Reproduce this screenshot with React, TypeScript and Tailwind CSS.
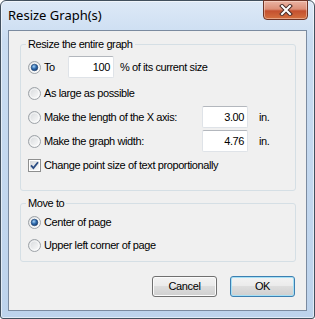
import React from 'react';

const body = "font-['Liberation_Sans',Arial,sans-serif] text-[11px] tracking-[-0.4px] text-black";

function Radio({ checked }: { checked?: boolean }) {
  return (
    <svg width="13" height="13" viewBox="0 0 13 13" className="shrink-0">
      <defs>
        <linearGradient id="rfill" x1="0" y1="0" x2="1" y2="1">
          <stop offset="0" stopColor="#d3d6d9" />
          <stop offset="1" stopColor="#ffffff" />
        </linearGradient>
        <radialGradient id="rdot" cx="0.4" cy="0.35" r="0.7">
          <stop offset="0" stopColor="#a9d4f5" />
          <stop offset="0.5" stopColor="#2f6cb0" />
          <stop offset="1" stopColor="#15386a" />
        </radialGradient>
      </defs>
      <circle cx="6.5" cy="6.5" r="6" fill="url(#rfill)" stroke="#9da2a7" />
      <circle cx="6.5" cy="6.5" r="4.5" fill="none" stroke="#ffffff" strokeOpacity="0.6" />
      {checked && <circle cx="6.5" cy="6.5" r="3.3" fill="url(#rdot)" stroke="#1d3f6e" strokeWidth="0.6" />}
    </svg>
  );
}

function Check() {
  return (
    <svg width="13" height="13" viewBox="0 0 13 13" className="shrink-0">
      <defs>
        <linearGradient id="cfill" x1="0" y1="0" x2="1" y2="1">
          <stop offset="0" stopColor="#d4d7da" />
          <stop offset="1" stopColor="#fbfbfb" />
        </linearGradient>
      </defs>
      <rect x="0.5" y="0.5" width="12" height="12" fill="#fff" stroke="#8e8f8f" />
      <rect x="2" y="2" width="9" height="9" fill="url(#cfill)" />
      <path d="M3 6.3 L5.4 9 L10 3.2" fill="none" stroke="#2b4d84" strokeWidth="1.8" />
    </svg>
  );
}

function Field({ value }: { value: string }) {
  return (
    <div className="flex h-[22px] w-[46px] shrink-0 items-center justify-end rounded-[2px] border border-[#dfe3e8] border-t-[#b3b7bd] bg-white pr-[3px]">
      {value}
    </div>
  );
}

function Button({ label, primary }: { label: string; primary?: boolean }) {
  return (
    <div
      className={
        'flex h-[21px] w-[65px] items-center justify-center rounded-[3px] border bg-[linear-gradient(180deg,#f3f3f3_0%,#ebebeb_45%,#dddddd_50%,#cfcfcf_100%)] ' +
        (primary
          ? 'border-[#3c7fb1] shadow-[inset_0_0_0_1px_#a6e0f5]'
          : 'border-[#707070] shadow-[inset_0_0_0_1px_#fbfbfb]')
      }
    >
      {label}
    </div>
  );
}

export default function App() {
  return (
    <div className="h-[319px] w-[315px] bg-white">
      <div className="flex h-full flex-col rounded-t-[6px] rounded-b-[3px] border border-[#42505e] bg-[linear-gradient(180deg,#dde9f7_0px,#c9dcf1_40px,#bdd3ec_100%)] px-[7px] pb-[7px] shadow-[inset_0_0_0_1px_rgba(255,255,255,0.55)]">
        <div className="flex h-[29px] shrink-0 items-start justify-between">
          <span className="pt-[6px] font-['Noto_Sans','Open_Sans',sans-serif] text-[13px] leading-[16px] text-black">Resize Graph(s)</span>
          <div className="-mr-[1px] -mt-[1px] flex h-[20px] w-[45px] items-center justify-center rounded-b-[4px] border border-[#6e3426] bg-[linear-gradient(180deg,#eab3a3_0%,#dc8f78_45%,#c4502f_55%,#d4703f_100%)] shadow-[inset_0_0_0_1px_rgba(255,230,220,0.45)]">
            <svg width="14" height="12" viewBox="0 0 14 12">
              <path d="M3 2 L11 10 M11 2 L3 10" stroke="#4a2c28" strokeWidth="4" strokeLinecap="square" />
              <path d="M3 2 L11 10 M11 2 L3 10" stroke="#ffffff" strokeWidth="2" strokeLinecap="square" />
            </svg>
          </div>
        </div>
        <div className={'flex flex-1 flex-col border border-[#7b8ba0] bg-[#f0f0f0] pl-[11px] pr-[10px] pt-[6px] ' + body}>
          <fieldset className="rounded-[3px] border border-[#d5dfe5]">
            <legend className="ml-[5px] px-[2px] leading-[14px]">Resize the entire graph</legend>
            <div className="flex flex-col px-[7px] pb-[13px] pt-[4px]">
              <div className="flex h-[24px] items-center">
                <Radio checked />
                <span className="ml-[3px] w-[24px]">To</span>
                <Field value="100" />
                <span className="ml-[6px]">% of its current size</span>
              </div>
              <div className="mt-[2px] flex h-[24px] items-center">
                <Radio />
                <span className="ml-[3px]">As large as possible</span>
              </div>
              <div className="flex h-[24px] items-center">
                <Radio />
                <span className="ml-[3px] w-[158px]">Make the length of the X axis:</span>
                <Field value="3.00" />
                <span className="ml-[11px]">in.</span>
              </div>
              <div className="flex h-[24px] items-center">
                <Radio />
                <span className="ml-[3px] w-[158px]">Make the graph width:</span>
                <Field value="4.76" />
                <span className="ml-[11px]">in.</span>
              </div>
              <div className="flex h-[24px] items-center">
                <Check />
                <span className="ml-[3px]">Change point size of text proportionally</span>
              </div>
            </div>
          </fieldset>
          <fieldset className="mt-[5px] rounded-[3px] border border-[#d5dfe5]">
            <legend className="ml-[5px] px-[2px] leading-[14px]">Move to</legend>
            <div className="flex flex-col px-[7px] pb-[4px]">
              <div className="flex h-[24px] items-center">
                <Radio checked />
                <span className="ml-[3px]">Center of page</span>
              </div>
              <div className="flex h-[23px] items-center">
                <Radio />
                <span className="ml-[3px]">Upper left corner of page</span>
              </div>
            </div>
          </fieldset>
          <div className="mr-[1px] mt-[14px] flex justify-end gap-[13px]">
            <Button label="Cancel" />
            <Button label="OK" primary />
          </div>
        </div>
      </div>
    </div>
  );
}
